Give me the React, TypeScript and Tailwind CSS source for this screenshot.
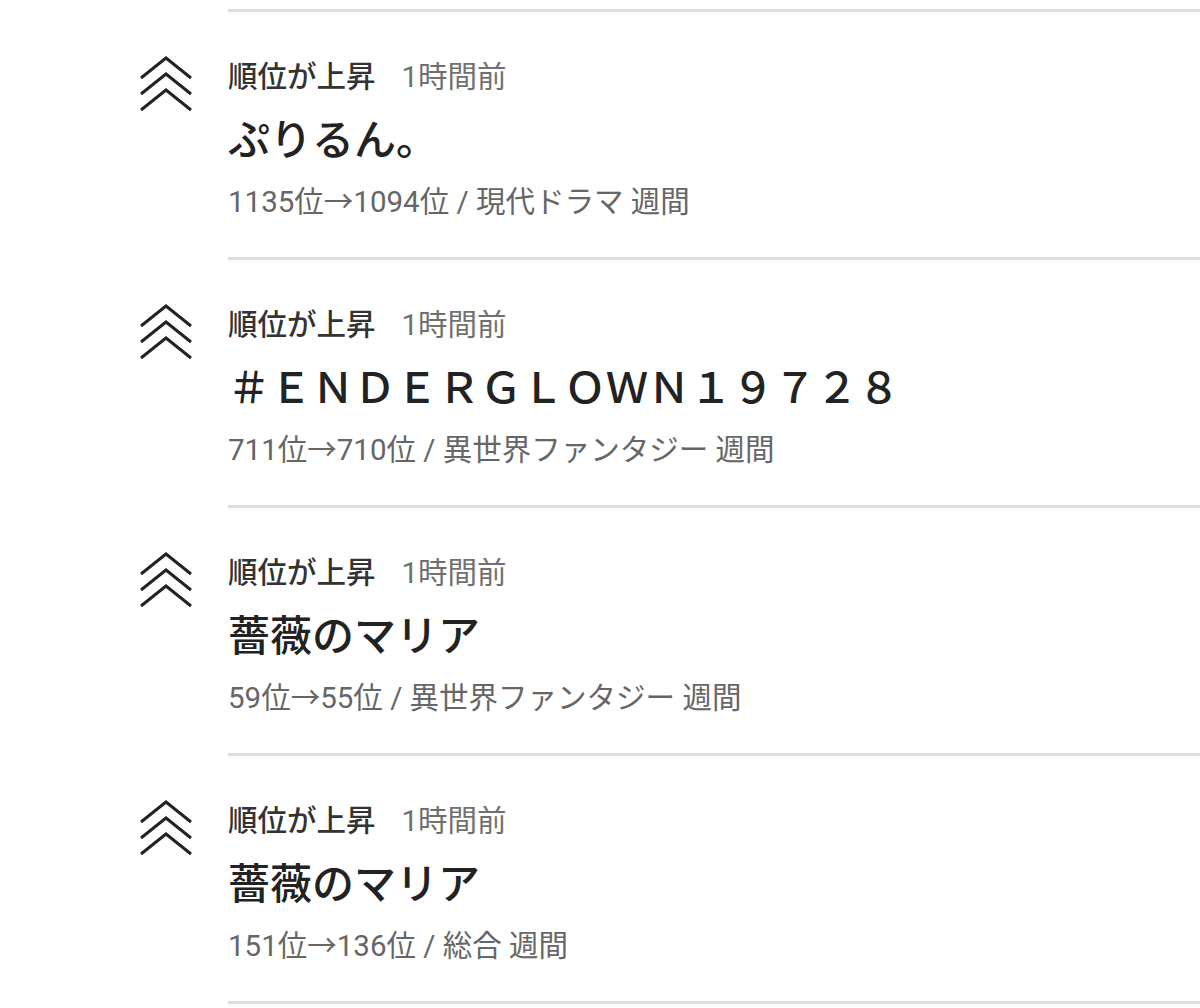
const items = [
  { title: "ぷりるん。", detail: "1135位→1094位 / 現代ドラマ 週間" },
  { title: "＃ＥＮＤＥＲＧＬＯＷＮ１９７２８", detail: "711位→710位 / 異世界ファンタジー 週間" },
  { title: "薔薇のマリア", detail: "59位→55位 / 異世界ファンタジー 週間" },
  { title: "薔薇のマリア", detail: "151位→136位 / 総合 週間" },
];

function RankUpIcon() {
  return (
    <svg width="56" height="58" viewBox="0 0 56 58" fill="none" stroke="#222" strokeWidth="3">
      <path d="M3 22 L28 2 L53 22" />
      <path d="M3 38 L28 18 L53 38" />
      <path d="M3 54 L28 34 L53 54" />
    </svg>
  );
}

export default function App() {
  return (
    <div
      className="w-[1200px] bg-white"
      style={{ fontFamily: "Roboto, 'Noto Sans CJK JP', sans-serif" }}
    >
      <div className="ml-[228px] h-[12px] border-b-[3px] border-[#dddddd]" />
      {items.map((item, i) => (
        <div key={i} className="flex">
          <div className="w-[228px] shrink-0 pl-[138px] pt-[44px]">
            <RankUpIcon />
          </div>
          <div className="flex-1 border-b-[3px] border-[#dddddd] pt-[45px] pb-[35px]">
            <div className="flex items-center h-[40px] text-[29.5px]">
              <span className="font-medium text-[#333333]">順位が上昇</span>
              <span className="ml-[26px] text-[#707070]">1時間前</span>
            </div>
            <div className="mt-[15px] h-[56px] flex items-center text-[42px] font-medium text-[#222222] whitespace-nowrap">
              {item.title}
            </div>
            <div className="mt-[14px] h-[40px] flex items-center text-[29.5px] text-[#666666] whitespace-nowrap">
              {item.detail}
            </div>
          </div>
        </div>
      ))}
    </div>
  );
}
